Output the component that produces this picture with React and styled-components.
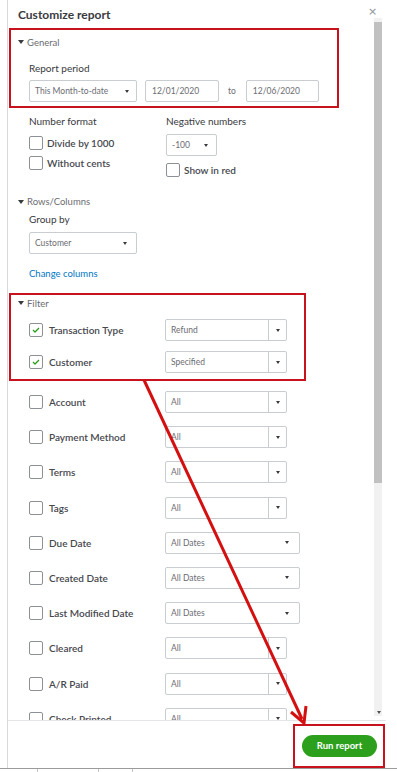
import React from "react";
import styled, { createGlobalStyle } from "styled-components";

const RED = "#c8131f";

const GlobalStyle = createGlobalStyle`
  html, body {
    margin: 0;
    padding: 0;
    background: #ffffff;
  }
  body {
    font-family: "Lato", "Noto Sans", sans-serif;
    color: #393a3d;
  }
`;

const Screen = styled.div`
  position: relative;
  width: 397px;
  height: 772px;
  overflow: hidden;
  background: #ffffff;
  display: flex;
  flex-direction: column;
`;

const Panel = styled.div`
  margin-left: 7px;
  width: 379px;
  height: 768px;
  border-left: 1px solid #d8dadd;
  display: flex;
  flex-direction: column;
  box-sizing: border-box;
`;

const Body = styled.div`
  height: 720px;
  display: flex;
`;

const Content = styled.div`
  flex: 1;
  overflow: hidden;
  padding: 8px 0 0 10px;
  display: flex;
  flex-direction: column;
`;

const Title = styled.div`
  height: 14px;
  line-height: 14px;
  font-size: 12px;
  font-weight: 700;
  color: #393a3d;
`;

const Annotated = styled.div`
  margin-left: -9px;
  margin-top: ${(p) => p.$top}px;
  width: ${(p) => p.$width}px;
  border: 2px solid ${RED};
  box-sizing: border-box;
  padding: ${(p) => p.$padTop}px 0 ${(p) => p.$padBottom}px 7px;
  display: flex;
  flex-direction: column;
`;

const Toggle = styled.div`
  display: flex;
  align-items: center;
  gap: 3px;
  height: 12px;
  margin-top: ${(p) => p.$top || 0}px;
  font-size: 9.5px;
  color: #6b6c72;
  &::before {
    content: "";
    border-left: 3.5px solid transparent;
    border-right: 3.5px solid transparent;
    border-top: 4.5px solid #393a3d;
  }
`;

const Field = styled.div`
  margin-left: 11px;
  margin-top: ${(p) => p.$top || 0}px;
  display: flex;
  flex-direction: column;
`;

const Label = styled.div`
  height: 12px;
  line-height: 12px;
  font-size: 10px;
  color: #393a3d;
`;

const Inline = styled.div`
  display: flex;
  align-items: center;
`;

const SelectBox = styled.div`
  width: ${(p) => p.$width}px;
  height: 22px;
  box-sizing: border-box;
  border: 1px solid #c9ccd1;
  border-radius: 2px;
  background: #fff;
  display: flex;
  align-items: center;
  font-size: 8.5px;
  color: #6b6c72;
  flex-shrink: 0;
`;

const SelectText = styled.span`
  flex: 1;
  padding-left: 5px;
  white-space: nowrap;
  overflow: hidden;
`;

const Caret = styled.span`
  width: ${(p) => p.$w || 18}px;
  height: 100%;
  display: flex;
  align-items: center;
  justify-content: center;
  border-left: ${(p) => (p.$divided ? "1px solid #c9ccd1" : "none")};
  box-sizing: border-box;
  &::after {
    content: "";
    border-left: 2.5px solid transparent;
    border-right: 2.5px solid transparent;
    border-top: 3.5px solid #393a3d;
  }
`;

const Select = ({ value, width, divided, caretWidth }) => (
  <SelectBox $width={width}>
    <SelectText>{value}</SelectText>
    <Caret $divided={divided} $w={caretWidth} />
  </SelectBox>
);

const DateInput = styled.div`
  width: ${(p) => p.$width}px;
  height: 22px;
  box-sizing: border-box;
  border: 1px solid #c9ccd1;
  border-radius: 2px;
  display: flex;
  align-items: center;
  padding-left: 6px;
  font-size: 8.5px;
  color: #6b6c72;
`;

const ToText = styled.span`
  font-size: 8.5px;
  color: #6b6c72;
  margin: 0 ${(p) => p.$right}px 0 ${(p) => p.$left}px;
`;

const Columns = styled.div`
  display: grid;
  grid-template-columns: 137px 1fr;
  margin-left: 11px;
  margin-top: 7px;
`;

const Col = styled.div`
  display: flex;
  flex-direction: column;
`;

const CheckRow = styled.div`
  display: flex;
  align-items: center;
  height: 14px;
  margin-top: ${(p) => p.$top || 0}px;
`;

const Box = styled.span`
  width: 14px;
  height: 14px;
  box-sizing: border-box;
  border: 1px solid #8d9096;
  border-radius: 2px;
  background: #fff;
  flex-shrink: 0;
  display: flex;
  align-items: center;
  justify-content: center;
`;

const CheckLabel = styled.span`
  margin-left: ${(p) => p.$gap}px;
  font-size: 10px;
  font-weight: 600;
  color: #47484d;
  white-space: nowrap;
  width: ${(p) => (p.$width ? `${p.$width}px` : "auto")};
`;

const Check = ({ checked }) => (
  <Box>
    {checked && (
      <svg width="8" height="6" viewBox="0 0 8 6">
        <path d="M1 3 L3 5 L7 1" fill="none" stroke="#2ca01c" strokeWidth="1.3" />
      </svg>
    )}
  </Box>
);

const Link = styled.div`
  margin-left: 11px;
  margin-top: 14px;
  height: 12px;
  line-height: 12px;
  font-size: 9.5px;
  color: #0077c5;
`;

const FilterRow = styled.div`
  display: flex;
  align-items: center;
  height: 22px;
  margin-left: 11px;
  margin-top: ${(p) => p.$top}px;
  flex-shrink: 0;
`;

const ScrollTrack = styled.div`
  width: 8px;
  margin-right: 4px;
  margin-top: 18px;
  margin-bottom: 4px;
  background: #f1f1f1;
  position: relative;
  display: flex;
  flex-direction: column;
`;

const ScrollThumb = styled.div`
  margin-top: 4px;
  height: 461px;
  background: #c1c1c1;
`;

const ScrollArrow = styled.span`
  position: absolute;
  left: 3px;
  bottom: 2px;
  border-left: 2px solid transparent;
  border-right: 2px solid transparent;
  border-top: 3px solid #505050;
`;

const Close = styled.span`
  position: absolute;
  left: 368px;
  top: 5px;
  font-size: 11px;
  color: #8d9096;
  font-family: "DejaVu Sans", sans-serif;
`;

const Footer = styled.div`
  flex: 1;
  border-top: 1px solid #e3e5e8;
  display: flex;
  justify-content: flex-end;
  align-items: flex-start;
  padding: 3px 1px 0 0;
`;

const ButtonFrame = styled.div`
  border: 2px solid ${RED};
  padding: 7px 6px 9px 7px;
`;

const RunButton = styled.button`
  width: 75px;
  height: 22px;
  border: none;
  border-radius: 11px;
  background: #2ca01c;
  color: #fff;
  font-family: "Lato", "Noto Sans", sans-serif;
  font-size: 9.5px;
  font-weight: 700;
  padding: 0;
`;

const BottomBar = styled.div`
  height: 4px;
  border-top: 1px solid #9b9b9b;
  display: flex;
`;

const Tab = styled.span`
  width: ${(p) => p.$w}px;
  border-right: 1px solid #c4c4c4;
`;

const Overlay = styled.svg`
  position: absolute;
  left: 0;
  top: 0;
  pointer-events: none;
`;

const filters = [
  ["Account", "All"],
  ["Payment Method", "All"],
  ["Terms", "All"],
  ["Tags", "All"],
  ["Due Date", "All Dates", true],
  ["Created Date", "All Dates", true],
  ["Last Modified Date", "All Dates", true],
  ["Cleared", "All"],
  ["A/R Paid", "All"],
  ["Check Printed", "All"],
];

export default function App() {
  return (
    <>
      <GlobalStyle />
      <Screen>
        <Panel>
          <Body>
            <Content>
              <Title>Customize report</Title>

              <Annotated $top={6} $width={330} $padTop={6} $padBottom={4}>
                <Toggle>General</Toggle>
                <Field $top={14}>
                  <Label>Report period</Label>
                  <Inline style={{ marginTop: 6 }}>
                    <Select value="This Month-to-date" width={108} caretWidth={18} />
                    <ToText $left={8} $right={0} />
                    <DateInput $width={74}>12/01/2020</DateInput>
                    <ToText $left={9} $right={10}>to</ToText>
                    <DateInput $width={73}>12/06/2020</DateInput>
                  </Inline>
                </Field>
              </Annotated>

              <Columns>
                <Col>
                  <Label>Number format</Label>
                  <CheckRow $top={9}>
                    <Check />
                    <CheckLabel $gap={4}>Divide by 1000</CheckLabel>
                  </CheckRow>
                  <CheckRow $top={6}>
                    <Check />
                    <CheckLabel $gap={4}>Without cents</CheckLabel>
                  </CheckRow>
                </Col>
                <Col>
                  <Label>Negative numbers</Label>
                  <Inline style={{ marginTop: 7 }}>
                    <Select value="-100" width={51} caretWidth={20} />
                  </Inline>
                  <CheckRow $top={7}>
                    <Check />
                    <CheckLabel $gap={4}>Show in red</CheckLabel>
                  </CheckRow>
                </Col>
              </Columns>

              <Toggle $top={19}>Rows/Columns</Toggle>
              <Field $top={6}>
                <Label>Group by</Label>
                <Inline style={{ marginTop: 7 }}>
                  <Select value="Customer" width={108} caretWidth={22} />
                </Inline>
              </Field>
              <Link>Change columns</Link>

              <Annotated $top={13} $width={297} $padTop={2} $padBottom={6}>
                <Toggle>Filter</Toggle>
                <FilterRow $top={10}>
                  <Check checked />
                  <CheckLabel $gap={6} $width={116}>Transaction Type</CheckLabel>
                  <Select value="Refund" width={122} divided />
                </FilterRow>
                <FilterRow $top={10}>
                  <Check checked />
                  <CheckLabel $gap={6} $width={116}>Customer</CheckLabel>
                  <Select value="Specified" width={122} divided />
                </FilterRow>
              </Annotated>

              {filters.map(([name, value, dates], i) => (
                <FilterRow key={name} $top={i === 0 ? 10 : 13.2}>
                  <Check />
                  <CheckLabel $gap={6} $width={116}>{name}</CheckLabel>
                  {dates ? (
                    <Select value={value} width={135} caretWidth={24} />
                  ) : (
                    <Select value={value} width={122} divided />
                  )}
                </FilterRow>
              ))}
            </Content>
            <ScrollTrack>
              <ScrollThumb />
              <ScrollArrow />
            </ScrollTrack>
          </Body>
          <Footer>
            <ButtonFrame>
              <RunButton>Run report</RunButton>
            </ButtonFrame>
          </Footer>
        </Panel>
        <BottomBar>
          <Tab $w={37} />
          <Tab $w={60} />
          <Tab $w={33} />
        </BottomBar>

        <Close>×</Close>
        <Overlay width="397" height="772" viewBox="0 0 397 772">
          <line x1="144" y1="380" x2="302" y2="719" stroke="#d40f0f" strokeWidth="3" />
          <polyline
            points="291,712 304,723 306,706"
            fill="none"
            stroke="#d40f0f"
            strokeWidth="3"
            strokeLinejoin="miter"
          />
        </Overlay>
      </Screen>
    </>
  );
}
